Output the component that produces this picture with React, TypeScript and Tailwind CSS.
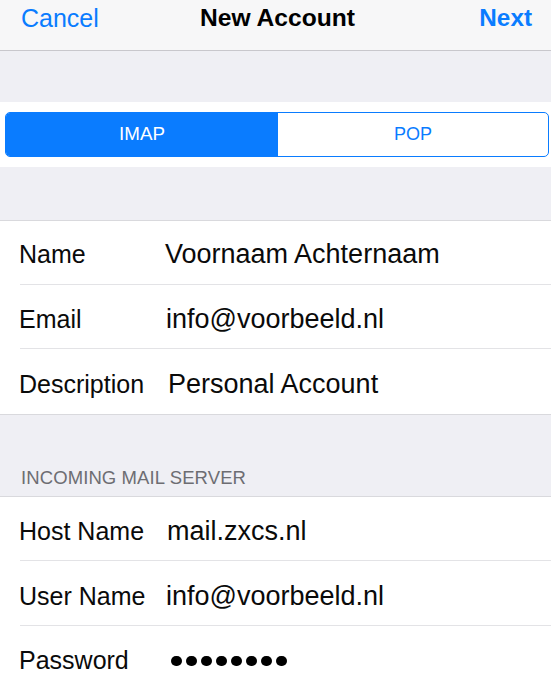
import React from "react";

type RowProps = {
  label: string;
  value: React.ReactNode;
  valueClass?: string;
  h?: string;
  sep?: boolean;
  pt?: string;
};

function Row({ label, value, valueClass = "", h = "h-[64px]", sep = true, pt = "pt-[2px]" }: RowProps) {
  return (
    <div className="pl-[20px]">
      <div className={`flex items-center ${h} ${pt} ${sep ? "border-b border-[#e3e3e6]" : ""}`}>
        <div className="w-[147px] shrink-0 -ml-[1px] text-[25px] text-[#0a0a0a] leading-[30px] whitespace-nowrap">
          {label}
        </div>
        <div className={`text-[27px] text-[#0a0a0a] leading-[32px] whitespace-nowrap ${valueClass}`}>{value}</div>
      </div>
    </div>
  );
}

function Dots() {
  return (
    <div className="flex items-center gap-[4.5px] ml-[5px] mt-[2px]">
      {Array.from({ length: 8 }).map((_, i) => (
        <span key={i} className="block w-[10.5px] h-[10.5px] rounded-full bg-black" />
      ))}
    </div>
  );
}

export default function App() {
  return (
    <div className="w-[551px] h-[679px] overflow-hidden bg-[#efeff4] font-['Liberation_Sans',Arial,sans-serif]">
      {/* Nav bar */}
      <div className="h-[51px] bg-[#f7f7f8] border-b border-[#c8c7cc] grid grid-cols-[1fr_auto_1fr] items-center pb-[15px] pl-[21px] pr-[19px]">
        <div className="text-[25px] leading-[30px] text-[#0a7cff]">Cancel</div>
        <div className="text-[24.6px] leading-[30px] font-bold text-black translate-x-[1px]">New Account</div>
        <div className="justify-self-end text-[24.3px] leading-[30px] font-bold text-[#0a7cff]">Next</div>
      </div>

      {/* Spacer */}
      <div className="h-[51px]" />

      {/* Segmented control */}
      <div className="h-[65px] bg-white pl-[5px] pr-[2px] pt-[10px]">
        <div className="flex h-[45px] rounded-[5px] border border-[#0a7cff] overflow-hidden">
          <div className="w-[272px] shrink-0 bg-[#0a7cff] flex items-center justify-center text-white text-[18.8px]">
            IMAP
          </div>
          <div className="flex-1 flex items-center justify-center text-[#0a7cff] text-[18px]">POP</div>
        </div>
      </div>

      {/* Spacer */}
      <div className="h-[53px]" />

      {/* Account group */}
      <div className="bg-white border-t border-b border-[#d9d9dd]">
        <Row label="Name" value="Voornaam Achternaam" valueClass="ml-[-1px]" />
        <Row label="Email" value="info@voorbeeld.nl" pt="pt-[4px]" />
        <Row label="Description" value="Personal Account" valueClass="text-[25px] ml-[2px]" h="h-[65px]" sep={false} pt="pt-[4px]" />
      </div>

      {/* Section header */}
      <div className="h-[81px] flex items-end pb-[7px] pl-[21px]">
        <div className="text-[18.5px] leading-[22px] text-[#6d6d72] tracking-[0.1px]">INCOMING MAIL SERVER</div>
      </div>

      {/* Server group */}
      <div className="bg-white border-t border-[#d9d9dd]">
        <Row label="Host Name" value="mail.zxcs.nl" valueClass="ml-[1px]" pt="pt-[5px]" />
        <Row label="User Name" value="info@voorbeeld.nl" h="h-[65px]" pt="pt-[5px]" />
        <Row label="Password" value={<Dots />} h="h-[65px]" sep={false} pt="pt-[3px]" />
      </div>
    </div>
  );
}
